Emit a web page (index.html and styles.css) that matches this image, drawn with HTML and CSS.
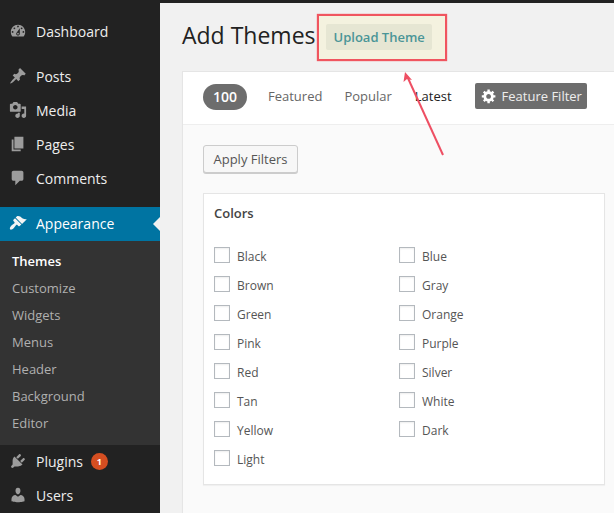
FILE: index.html
```html
<!DOCTYPE html>
<html lang="en">
<head>
<meta charset="utf-8">
<title>Add Themes</title>
<link rel="stylesheet" href="styles.css">
</head>
<body>
<div class="admin">
  <nav class="sidebar">
    <ul class="menu first">
      <li class="item"><svg class="ico" viewBox="0 0 20 20"><path d="M3.76 16h12.48c1.1-1.37 1.76-3.11 1.76-5 0-4.42-3.58-8-8-8s-8 3.58-8 8c0 1.89.66 3.63 1.76 5zM10 4c.55 0 1 .45 1 1s-.45 1-1 1-1-.45-1-1 .45-1 1-1zM6 6c.55 0 1 .45 1 1s-.45 1-1 1-1-.45-1-1 .45-1 1-1zm8 0c.55 0 1 .45 1 1s-.45 1-1 1-1-.45-1-1 .45-1 1-1zm-5.37 5.55L12 7v6c0 1.1-.9 2-2 2s-2-.9-2-2c0-.57.24-1.08.63-1.45zM4 10c.55 0 1 .45 1 1s-.45 1-1 1-1-.45-1-1 .45-1 1-1zm12 0c.55 0 1 .45 1 1s-.45 1-1 1-1-.45-1-1 .45-1 1-1zm-5 3c0-.55-.45-1-1-1s-1 .45-1 1 .45 1 1 1 1-.45 1-1z" fill-rule="evenodd"/></svg>Dashboard</li>
    </ul>
    <ul class="menu">
      <li class="item"><svg class="ico" viewBox="0 0 20 20"><path d="M10.44 3.02l1.82-1.82 6.36 6.35-1.83 1.82c-1.05-.68-2.48-.57-3.41.36l-.75.75c-.92.93-1.04 2.35-.35 3.41l-1.83 1.82-2.41-2.41-2.8 2.79c-.42.42-3.38 2.71-3.8 2.29s1.86-3.39 2.28-3.81l2.79-2.79L4.1 9.36l1.83-1.82c1.05.69 2.48.57 3.4-.36l.75-.75c.93-.92 1.05-2.35.36-3.41z"/></svg>Posts</li>
      <li class="item"><svg class="ico" viewBox="0 0 20 20"><path fill-rule="evenodd" d="M13 11V4c0-.55-.45-1-1-1h-1.67L9 1H5L3.67 3H2c-.55 0-1 .45-1 1v7c0 .55.45 1 1 1h10c.55 0 1-.45 1-1zM7 4.5c1.38 0 2.5 1.12 2.5 2.5S8.38 9.5 7 9.5 4.5 8.38 4.5 7 5.62 4.5 7 4.5zM14 6h5v10.5c0 1.38-1.12 2.5-2.5 2.5S14 17.88 14 16.5s1.12-2.5 2.5-2.5c.17 0 .34.02.5.05V9h-3V6zm-4 8.05V13h2v3.5c0 1.38-1.12 2.5-2.5 2.5S7 17.88 7 16.5 8.12 14 9.5 14c.17 0 .34.02.5.05z"/></svg>Media</li>
      <li class="item"><svg class="ico" viewBox="0 0 20 20"><path d="M6 15V2h10v13H6zm-1 1h8v2H3V5h2v11z"/></svg>Pages</li>
      <li class="item"><svg class="ico" viewBox="0 0 20 20"><path d="M5 2h9c1.1 0 2 .9 2 2v7c0 1.1-.9 2-2 2h-2l-5 5v-5H5c-1.1 0-2-.9-2-2V4c0-1.1.9-2 2-2z"/></svg>Comments</li>
    </ul>
    <ul class="menu">
      <li class="item current"><svg class="ico" viewBox="0 0 20 20"><path d="M14.48 11.06L7.41 3.99l1.5-1.5c.5-.56 2.3-.47 3.51.32 1.21.8 1.43 1.28 2.91 2.1 1.18.64 2.45 1.26 4.45.85zm-.71.71L6.7 4.7 4.93 6.47c-.39.39-.39 1.02 0 1.41l1.06 1.06c.39.39.39 1.03 0 1.42-.6.6-1.43 1.11-2.21 1.69-.35.26-.7.53-1.01.84-1.34 1.36-2.43 3.33-1.54 4.18.9.85 2.78-.28 4.16-1.6.31-.31.58-.66.84-1.01.58-.78 1.09-1.61 1.69-2.21.39-.39 1.02-.39 1.41 0l1.06 1.06c.39.39 1.02.39 1.41 0z"/></svg>Appearance</li>
      <li>
        <ul class="submenu">
          <li class="sub active">Themes</li>
          <li class="sub">Customize</li>
          <li class="sub">Widgets</li>
          <li class="sub">Menus</li>
          <li class="sub">Header</li>
          <li class="sub">Background</li>
          <li class="sub">Editor</li>
        </ul>
      </li>
      <li class="item"><svg class="ico" viewBox="0 0 20 20"><path d="M13.11 4.36L9.87 7.6 8 5.73l3.24-3.24c.35-.34 1.05-.2 1.56.32.52.51.66 1.21.31 1.55zm-8 1.77l.91-1.12 9.01 9.01-1.19.84c-.71.71-2.63 1.16-3.82 1.16H6.14L4.9 17.26c-.59.59-1.54.59-2.12 0-.59-.58-.59-1.53 0-2.12l1.24-1.24v-3.88c0-1.13.4-3.19 1.09-3.89zm7.26 3.97l3.24-3.24c.34-.35 1.04-.21 1.55.31.52.51.66 1.21.31 1.55l-3.24 3.25z"/></svg>Plugins<span class="badge">1</span></li>
      <li class="item"><svg class="ico" viewBox="0 0 20 20"><path d="M10 9.25c-2.27 0-2.73-3.44-2.73-3.44C7 4.02 7.82 2 9.97 2c2.16 0 2.98 2.02 2.71 3.81 0 0-.41 3.44-2.68 3.44zm0 2.57L12.72 10c2.39 0 4.52 2.33 4.52 4.53v2.49s-3.65 1.13-7.24 1.13c-3.65 0-7.24-1.13-7.24-1.13v-2.49c0-2.25 1.94-4.48 4.47-4.48z"/></svg>Users</li>
    </ul>
  </nav>
  <main class="content">
    <header class="head">
      <h1 class="title">Add Themes</h1>
      <a class="upload">Upload Theme</a>
      <span class="highlight"></span>
    </header>
    <section class="card">
      <div class="toolbar">
        <span class="count">100</span>
        <a class="tab tab-featured">Featured</a>
        <a class="tab tab-popular">Popular</a>
        <a class="tab tab-latest">Latest</a>
        <a class="filter"><svg class="gear" viewBox="0 0 20 20"><path fill-rule="evenodd" d="M18 12h-2.18c-.17.7-.44 1.35-.81 1.93l1.54 1.54-2.1 2.1-1.54-1.54c-.58.36-1.23.63-1.91.79V19H8v-2.18c-.68-.16-1.33-.43-1.91-.79l-1.54 1.54-2.12-2.12 1.54-1.54c-.36-.58-.63-1.23-.79-1.91H1V9.03h2.17c.16-.7.44-1.35.8-1.94L2.43 5.55l2.1-2.1 1.54 1.54c.58-.37 1.24-.64 1.93-.81V2h3v2.18c.68.16 1.33.43 1.91.79l1.54-1.54 2.12 2.12-1.54 1.54c.36.59.64 1.24.8 1.94H18V12zm-8.5 1.5c1.66 0 3-1.34 3-3s-1.34-3-3-3-3 1.34-3 3 1.34 3 3 3z"/></svg>Feature Filter</a>
      </div>
      <div class="filters">
        <button class="apply">Apply Filters</button>
        <div class="group">
          <h2 class="group-title">Colors</h2>
          <div class="options">
            <label class="opt"><span class="check"></span>Black</label>
            <label class="opt"><span class="check"></span>Blue</label>
            <label class="opt"><span class="check"></span>Brown</label>
            <label class="opt"><span class="check"></span>Gray</label>
            <label class="opt"><span class="check"></span>Green</label>
            <label class="opt"><span class="check"></span>Orange</label>
            <label class="opt"><span class="check"></span>Pink</label>
            <label class="opt"><span class="check"></span>Purple</label>
            <label class="opt"><span class="check"></span>Red</label>
            <label class="opt"><span class="check"></span>Silver</label>
            <label class="opt"><span class="check"></span>Tan</label>
            <label class="opt"><span class="check"></span>White</label>
            <label class="opt"><span class="check"></span>Yellow</label>
            <label class="opt"><span class="check"></span>Dark</label>
            <label class="opt"><span class="check"></span>Light</label>
          </div>
        </div>
      </div>
    </section>
    <svg class="arrow" viewBox="0 0 50 90" aria-hidden="true">
      <path class="arrow-line" d="M43 84 L7 5"/>
      <path class="arrow-head" d="M5 1 L12 9 L7 8 L3.5 11 Z"/>
    </svg>
  </main>
</div>
</body>
</html>
```
FILE: styles.css
```css
* { box-sizing: border-box; }
html, body { margin: 0; padding: 0; height: 100%; overflow: hidden; }
body { font-family: "Open Sans", sans-serif; font-size: 13px; color: #444; background: #f1f1f1; }
ul { list-style: none; margin: 0; padding: 0; }

.admin { display: flex; height: 513px; width: 614px; overflow: hidden; }

.sidebar { flex: 0 0 160px; background: #222; padding-top: 15px; }
.menu { margin-bottom: 11px; }
.item { position: relative; display: flex; align-items: center; height: 34px; padding: 0 0 2px 9px; font-size: 14px; color: #eee; }
.ico { width: 18px; height: 18px; margin-right: 9px; fill: #9c9c9c; flex: none; }
.current { background: #0074a2; color: #fff; }
.current .ico { fill: #f4f4f4; }
.current::after { content: ""; position: absolute; right: 0; top: 10px; border: 7px solid transparent; border-left-width: 0; border-right: 7px solid #f1f1f1; }
.submenu { background: #333; padding: 7px 0 8px; }
.sub { height: 27px; line-height: 27px; padding-left: 12px; color: #b0b0b0; font-size: 13px; }
.active { color: #fff; font-weight: 600; }
.badge { display: inline-block; width: 17px; height: 17px; margin-left: 8px; border-radius: 50%; background: #d54e21; color: #fff; font-size: 9px; font-weight: 700; line-height: 17px; text-align: center; }

.content { position: relative; flex: 1; min-width: 0; border-top: 3px solid #222; }
.head { position: relative; display: flex; align-items: center; height: 69px; padding-left: 22px; margin-top: -1px; }
.title { margin: -3px 0 0; font-size: 23px; font-weight: 400; color: #222; line-height: 29px; }
.upload { position: relative; z-index: 1; margin-left: 10px; margin-top: 1px; height: 26px; line-height: 26px; padding: 0 7px 0 8px; background: #e6e6d3; color: #4a9597; font-size: 13px; font-weight: 600; border-radius: 2px; }
.highlight { position: absolute; left: 157px; top: 12px; width: 130px; height: 47px; background: #f4f2df; border: 2px solid #f0555f; box-shadow: 0 0 1px #f0555f; }

.card { margin-left: 22px; width: 440px; height: 460px; background: #fafafa; box-shadow: 0 1px 1px rgba(0,0,0,.04); border: 1px solid #e5e5e5; border-right: 0; }
.toolbar { display: flex; align-items: center; height: 53px; padding-left: 20px; background: #fff; border-bottom: 1px solid #eee; }
.count { width: 44px; height: 26px; line-height: 25px; margin-bottom: 2px; border-radius: 13px; background: #6d6d6d; color: #fff; font-size: 14px; font-weight: 600; text-align: center; }
.tab { color: #666; font-size: 13px; margin: 0 0 4px 23px; }
.tab-featured { margin-left: 21px; }
.tab-popular { margin-left: 22px; }
.tab-latest { color: #222; }
.filter { display: flex; align-items: center; height: 26px; margin: 0 0 4px 23px; padding: 0 5px 0 6px; background: #6d6d6d; border-radius: 2px; color: #eee; font-size: 13px; }
.gear { width: 16px; height: 16px; margin-right: 5px; fill: #fff; }

.filters { padding: 20px 0 0 20px; }
.apply { display: block; width: 95px; height: 28px; padding: 0; border: 1px solid #ccc; border-radius: 3px; background: #f7f7f7; box-shadow: 0 1px 0 #ccc; color: #555; font: 13px "Open Sans", sans-serif; }
.group { width: 402px; height: 292px; margin-top: 20px; padding: 10px 10px 0; background: #fff; border: 1px solid #e5e5e5; box-shadow: 0 1px 1px rgba(0,0,0,.04); }
.group-title { margin: 0 0 19px; font-size: 13px; font-weight: 600; line-height: 18px; color: #444; }
.options { display: grid; grid-template-columns: 185px 185px; grid-auto-rows: 29px; }
.opt { display: flex; align-items: center; padding-top: 1px; color: #555; font-size: 12px; }
.check { width: 16px; height: 16px; margin: -2px 7px 0 0; border: 1px solid #b4b9be; background: #fff; box-shadow: inset 0 1px 2px rgba(0,0,0,.07); }

.arrow { position: absolute; left: 240px; top: 68px; width: 50px; height: 90px; overflow: visible; }
.arrow-line { fill: none; stroke: #ee4f63; stroke-width: 2; }
.arrow-head { fill: #ee4f63; }
```
